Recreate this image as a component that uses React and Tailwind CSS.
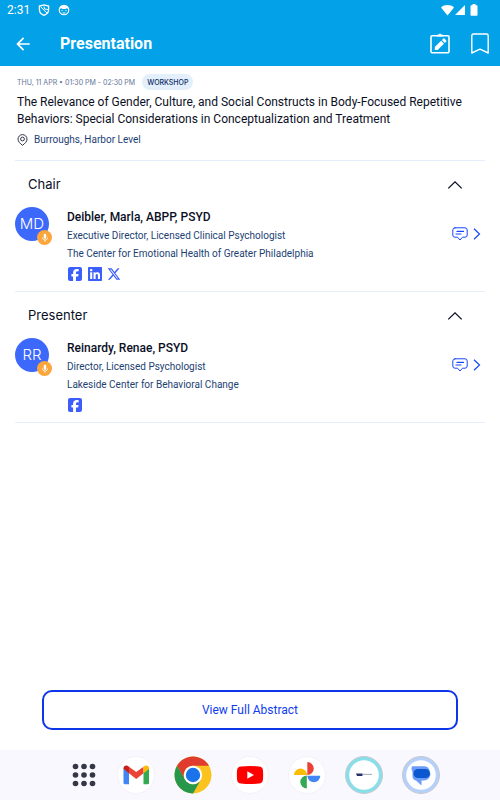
import React, { useState } from 'react';
import { MdArrowBack, MdMic } from 'react-icons/md';
import { FaSquareFacebook, FaLinkedin, FaXTwitter } from 'react-icons/fa6';

const SOCIAL_ICONS = {
  facebook: { label: 'Facebook', Icon: FaSquareFacebook },
  linkedin: { label: 'LinkedIn', Icon: FaLinkedin },
  x: { label: 'X', Icon: FaXTwitter },
};

const SECTIONS = [
  {
    title: 'Chair',
    person: {
      initials: 'MD',
      name: 'Deibler, Marla, ABPP, PSYD',
      role: 'Executive Director, Licensed Clinical Psychologist',
      company: 'The Center for Emotional Health of Greater Philadelphia',
      socials: ['facebook', 'linkedin', 'x'],
    },
  },
  {
    title: 'Presenter',
    person: {
      initials: 'RR',
      name: 'Reinardy, Renae, PSYD',
      role: 'Director, Licensed Psychologist',
      company: 'Lakeside Center for Behavioral Change',
      socials: ['facebook'],
    },
  },
];

function StatusBar() {
  return (
    <div className="flex h-5 items-center justify-between pl-[7px] pr-[22px]">
      <div className="flex items-center gap-2">
        <span className="text-[12px] leading-5">2:31</span>
        <svg className="h-3 w-3" viewBox="0 0 12 12" fill="none" stroke="currentColor" strokeWidth="1.3">
          <path d="M6 .8 10.6 2v3.4c0 2.800-1.800 4.800-4.600 5.900C3.200 10.200 1.400 8.200 1.400 5.400V2z" />
          <path d="M2.600 2.800 9 9M6 2.500l.5 2.500 3.500.5" strokeWidth="1" />
        </svg>
        <svg className="h-3 w-3" viewBox="0 0 12 12" fill="none" stroke="currentColor">
          <circle cx="6" cy="6" r="4.800" strokeWidth="1.100" />
          <path d="M1.500 5C2 2 4 1 6 1s4 1 4.500 4L8.500 4.300 7.500 5h-3l-1-.7z" fill="currentColor" stroke="none" />
          <path d="M4 6v1.200M8 6v1.200M4.500 9h3" strokeWidth="1" />
        </svg>
      </div>
      <div className="flex items-center">
        <svg className="h-3 w-[13px]" viewBox="0 0 13 12" fill="currentColor">
          <path d="M0 3.500C3.500.3 9.500.3 13 3.500L6.500 11.500z" />
        </svg>
        <svg className="h-3 w-3" viewBox="0 0 12 12" fill="currentColor">
          <path d="M1 11 11 1v10z" />
        </svg>
        <svg className="ml-1 h-3 w-2" viewBox="0 0 8 12" fill="currentColor">
          <path d="M2.500 0h3v1.200h1.300q.7 0 .7.700v9q0 .8-.7.800H1.200q-.7 0-.7-.8v-9q0-.7.7-.7h1.300z" />
        </svg>
      </div>
    </div>
  );
}

function Header() {
  return (
    <header className="bg-[#03a1e7] font-[Roboto,sans-serif] text-white">
      <StatusBar />
      <div className="flex h-[46px] items-center pl-[13px] pr-[10px] pt-px">
        <button aria-label="Back">
          <MdArrowBack className="h-5 w-5" />
        </button>
        <h1 className="ml-[27px] flex-1 text-base font-bold">Presentation</h1>
        <button aria-label="Notes" className="mr-5">
          <svg className="h-[22px] w-5" viewBox="0 0 20 22" fill="none" stroke="currentColor" strokeWidth="1.600">
            <rect x="1" y="2.800" width="18" height="17" rx="1" />
            <path d="M7 2.200h1.500c.3-1.400 2.700-1.400 3 0H13v.8H7z" fill="currentColor" strokeWidth="1" />
            <path d="M4.800 17v-2.900l6.300-6.300 2.900 2.900L7.700 17zM11.900 7l1.500-1.500q.5-.4 1 0l1.900 1.900q.4.500 0 1L14.800 9.900z" fill="currentColor" stroke="none" />
          </svg>
        </button>
        <button aria-label="Bookmark">
          <svg className="h-[22px] w-5" viewBox="0 0 20 22" fill="none" stroke="currentColor" strokeWidth="1.400" strokeLinejoin="round">
            <path d="M1.800 20V2.700Q1.800 1 3.500 1h13q1.700 0 1.700 1.700V20L10 16.200z" />
          </svg>
        </button>
      </div>
    </header>
  );
}

function SessionInfo() {
  return (
    <section className="border-b border-[#e3f0fb] px-0.5 pb-3 pt-2">
      <div className="flex h-4 items-center gap-[7px]">
        <span className="pt-px text-[7px] leading-4 text-[#64749a]">THU, 11 APR • 01:30 PM - 02:30 PM</span>
        <span className="rounded-full bg-[#e3f0fb] px-[5px] pt-px text-[7px] font-medium leading-[15px] text-[#0c2b63]">
          WORKSHOP
        </span>
      </div>
      <h2 className="mt-1 font-[Roboto,sans-serif] text-[12px] leading-[17px] text-[#0b0f26]">
        The Relevance of Gender, Culture, and Social Constructs in Body-Focused Repetitive Behaviors: Special
        Considerations in Conceptualization and Treatment
      </h2>
      <p className="mt-1 flex items-center gap-1.5 font-[Roboto,sans-serif] text-[10px] leading-4 text-[#1d3f73]">
        <svg className="h-3 w-[11px]" viewBox="0 0 11 12" fill="none" stroke="#1b2238" strokeWidth=".9">
          <path d="M5.500 11.300C3 9.500 1 7.500 1 5.100a4.500 4.500 0 0 1 9 0c0 2.400-2 4.400-4.500 6.200z" />
          <circle cx="5.500" cy="5" r="1.900" />
        </svg>
        Burroughs, Harbor Level
      </p>
    </section>
  );
}

function PersonRow({ person }) {
  return (
    <div className="flex pb-[9px]">
      <div className="relative h-[34px] w-[34px] shrink-0 rounded-full bg-[#3c68fb] text-center text-[15px] font-light leading-[34px] text-white">
        {person.initials}
        <span className="absolute -bottom-1 -right-[3px] flex h-[15px] w-[15px] items-center justify-center rounded-full bg-[#fba53a]">
          <MdMic className="h-[10px] w-[10px]" />
        </span>
      </div>
      <div className="ml-[18px] flex-1 font-[Roboto,sans-serif] text-[10px] leading-[18px] text-[#1d3f73]">
        <h4 className="text-[12px] font-medium leading-5 text-[#0b0f26]">{person.name}</h4>
        <p>{person.role}</p>
        <p>{person.company}</p>
        <div className="mt-[3px] flex items-center gap-1 text-[#3c5ffb]">
          {person.socials.map((key) => {
            const { label, Icon } = SOCIAL_ICONS[key];
            return (
              <a key={key} href={`#${key}`} aria-label={label}>
                <Icon className={key === 'x' ? 'h-[14px] w-[14px]' : 'h-4 w-4'} />
              </a>
            );
          })}
        </div>
      </div>
      <div className="flex h-[54px] items-center gap-[5px] pr-1 text-[#1747fa]">
        <button aria-label={`Message ${person.name}`}>
          <svg className="h-[14px] w-4" viewBox="0 0 16 14" fill="none" stroke="currentColor" strokeLinejoin="round" strokeLinecap="round">
            <path d="M3 .8h10q2.200 0 2.200 2.200v5q0 2.200-2.200 2.200h-2.500L8 13l-2.500-2.800H3Q.8 10.200.8 8V3Q.8.8 3 .8z" />
            <path d="M5 4.400h6.500M4 7h5" strokeWidth="1.200" />
          </svg>
        </button>
        <button aria-label={`Open ${person.name}`}>
          <svg className="h-3 w-2" viewBox="0 0 8 12" fill="none" stroke="currentColor" strokeWidth="1.200">
            <path d="m1 .7 5.500 5.300L1 11.300" />
          </svg>
        </button>
      </div>
    </div>
  );
}

function PeopleSection({ title, person }) {
  const [open, setOpen] = useState(true);

  return (
    <section className="border-b border-[#e3f0fb]">
      <h3>
        <button
          onClick={() => setOpen(!open)}
          aria-expanded={open}
          className="flex h-[46px] w-full items-center justify-between pl-[13px] pr-[22px] pt-px text-[13px] text-[#0b0f26]"
        >
          {title}
          <svg className="h-2 w-4" viewBox="0 0 16 8" fill="none" stroke="currentColor" strokeWidth="1.300">
            <path d="M1.300 7.400 8 .9l6.700 6.500" />
          </svg>
        </button>
      </h3>
      {open && <PersonRow person={person} />}
    </section>
  );
}

function Dock() {
  return (
    <nav className="flex h-[50px] items-center justify-center gap-[19px] bg-[#faf8ff] pl-[10px]">
      <button aria-label="All apps" className="w-7">
        <svg className="mx-auto h-6 w-6" viewBox="0 0 24 24" fill="#353744">
          {[3.5, 12, 20.5].map((y) =>
            [3.5, 12, 20.5].map((x) => <circle key={`${x}-${y}`} cx={x} cy={y} r="2.800" />)
          )}
        </svg>
      </button>
      <button aria-label="Gmail">
        <svg className="h-[38px] w-[38px]" viewBox="0 0 38 38">
          <circle cx="19" cy="19" r="18.500" fill="#fff" stroke="#f1eff5" strokeWidth=".8" />
          <path d="M6.500 12.500 12 16.500v11.700H8q-1.500 0-1.500-1.500z" fill="#4285f4" />
          <path d="M26.500 16.500 32 12.500v14.200q0 1.500-1.500 1.500h-4z" fill="#34a853" />
          <path d="M12 10.700 19.200 16l7.300-5.300v6.500L19.200 23 12 17.200z" fill="#ea4335" />
          <path d="M6.500 12.200c0-2.500 2.500-3.400 4.300-2.300l1.200.8v6.500l-5.500-4.200z" fill="#c5221f" />
          <path d="M32 12.200c0-2.500-2.500-3.400-4.300-2.300l-1.200.8v6.500L32 13z" fill="#fbbc04" />
        </svg>
      </button>
      <button aria-label="Chrome">
        <svg className="h-[38px] w-[38px]" viewBox="0 0 38 38">
          <circle cx="19" cy="19" r="18.500" fill="#fcc31e" />
          <path d="M3 9.750A18.500 18.500 0 0 1 35 9.750H19a9.250 9.250 0 0 0-8 13.900z" fill="#df3c2f" />
          <path d="M3 9.750A18.500 18.500 0 0 0 19 37.500l8-13.900a9.250 9.250 0 0 1-16 0z" fill="#25984b" />
          <circle cx="19" cy="19" r="9.200" fill="#fff" />
          <circle cx="19" cy="19" r="7.200" fill="#1a73e8" />
        </svg>
      </button>
      <button aria-label="YouTube">
        <svg className="h-[38px] w-[38px]" viewBox="0 0 38 38">
          <circle cx="19" cy="19" r="18.500" fill="#fff" stroke="#f1eff5" strokeWidth=".8" />
          <path d="M10 10.500q9-1 18 0 3.500.2 3.900 3.500.5 5 0 10-.4 3.300-3.900 3.500-9 1-18 0Q6.500 27.300 6.100 24q-.5-5 0-10 .4-3.300 3.900-3.500z" fill="#f00" />
          <path d="M16.300 15.200v7.600L23 19z" fill="#fff" />
        </svg>
      </button>
      <button aria-label="Photos">
        <svg className="h-[38px] w-[38px]" viewBox="0 0 38 38">
          <circle cx="19" cy="19" r="18.500" fill="#fff" stroke="#f1eff5" strokeWidth=".8" />
          <path d="M19.300 6a6.500 6.500 0 0 1 0 13z" fill="#ea4335" />
          <path d="M19.300 19.700h13a6.500 6.500 0 0 1-13 0z" fill="#4285f4" />
          <path d="M18.800 32.500a6.500 6.500 0 0 1 0-13z" fill="#34a853" />
          <path d="M19 19H6a6.500 6.500 0 0 1 13 0z" fill="#fbbc04" />
        </svg>
      </button>
      <button aria-label="Event app">
        <svg className="h-[38px] w-[38px]" viewBox="0 0 38 38">
          <circle cx="19" cy="19" r="18.500" fill="#88dfea" stroke="#c8c8cc" />
          <circle cx="19" cy="19" r="14.800" fill="#fff" />
          <path d="M11 17.500h6.500V20H12z" fill="#27306b" />
          <path d="M18 18.400h9" stroke="#a9b6c6" strokeWidth="1.200" />
        </svg>
      </button>
      <button aria-label="Messages">
        <svg className="h-[38px] w-[38px]" viewBox="0 0 38 38">
          <circle cx="19" cy="19" r="18.500" fill="#b5d0fb" stroke="#c8c8cc" />
          <circle cx="19" cy="19" r="14.800" fill="#fff" />
          <path d="M10 10.200h12q4 0 5 3l1.500 4.800a6.500 6.500 0 0 1-6.500 6.500h-2.500v5L14 24.500a4.500 4.500 0 0 1-3.500-4.500v-4q-2-3-.5-5.800z" fill="#6c9bf8" />
          <rect x="11.500" y="13" width="16.500" height="9" rx="4.500" fill="#0b57d0" />
        </svg>
      </button>
    </nav>
  );
}

export default function App() {
  return (
    <div className="flex min-h-screen flex-col bg-white font-[Inter,sans-serif]">
      <Header />
      <main className="flex flex-1 flex-col px-[15px]">
        <SessionInfo />
        {SECTIONS.map((section) => (
          <PeopleSection key={section.title} title={section.title} person={section.person} />
        ))}
        <div className="mt-auto px-[27px] pb-5">
          <button className="h-10 w-full rounded-[10px] border-2 border-[#0d35ea] font-[Roboto,sans-serif] text-[12px] text-[#0d3cf0]">
            View Full Abstract
          </button>
        </div>
      </main>
      <Dock />
    </div>
  );
}
